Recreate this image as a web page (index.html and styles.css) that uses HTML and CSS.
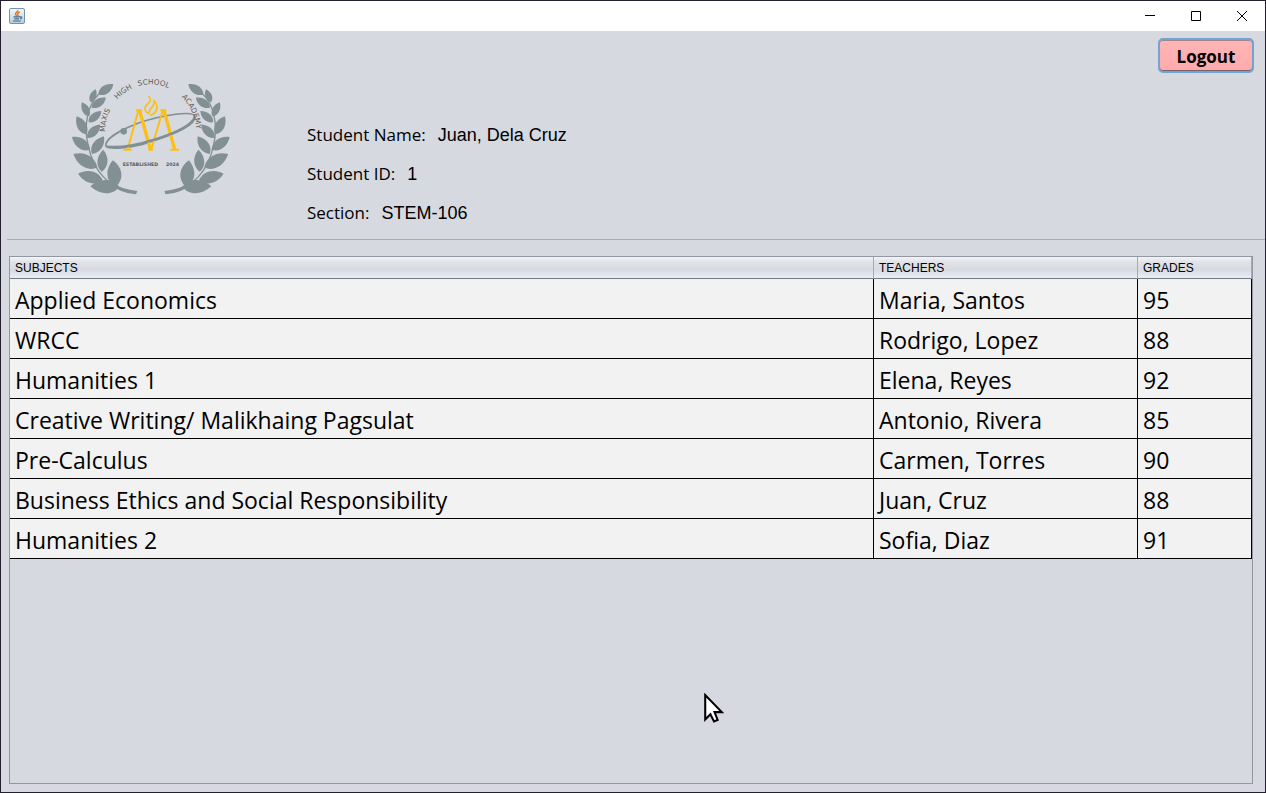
FILE: index.html
```html
<!DOCTYPE html>
<html lang="en">
<head>
<meta charset="utf-8">
<title>Student Grades</title>
<link rel="stylesheet" href="styles.css">
</head>
<body>
<div class="window">
  <header class="titlebar">
    <svg class="app-icon" viewBox="0 0 16 16" aria-hidden="true">
      <defs><linearGradient id="tile" x1="0" y1="0" x2="0" y2="1"><stop offset="0" stop-color="#f4f8fb"/><stop offset="1" stop-color="#b9cbd9"/></linearGradient></defs>
      <rect x=".5" y=".5" width="15" height="15" rx="1.5" fill="url(#tile)" stroke="#7593ab"/>
      <path d="M8.800 2C9.500 3.500 6 4.500 6.500 6.200C6.800 7.200 7.600 7.600 8 8.300M10.800 4C8.500 4.800 8 5.800 9 6.800C9.500 7.500 9 8 8.800 8.400" fill="none" stroke="#e3751f" stroke-width="1.400"/>
      <path d="M4.500 8.900H10.600M10.600 8.900C13.500 8.300 13.300 10.600 10.900 11M5.400 10.900H10M4 13H11.800" fill="none" stroke="#3f6d91" stroke-width="1.200"/>
    </svg>
    <div class="window-buttons">
      <button class="window-button" type="button" aria-label="Minimize"><svg viewBox="0 0 11 11"><path d="M0 4.500H10"/></svg></button>
      <button class="window-button" type="button" aria-label="Maximize"><svg viewBox="0 0 11 11"><path d="M.5 .5H9.500V9.500H.5Z"/></svg></button>
      <button class="window-button" type="button" aria-label="Close"><svg viewBox="0 0 11 11"><path d="M0 0L10 10M10 0L0 10"/></svg></button>
    </div>
  </header>

  <section class="profile">
    <svg class="logo" viewBox="0 0 540 420" role="img" aria-label="Maxis High School Academy">
      <defs>
        <path id="leaf" d="M0 0C.2 -.3 .65 -.32 1 0C.7 .3 .25 .3 0 0Z"/>
        <path id="arc" d="M135 200A137 145 0 0 1 409 200"/>
        <g id="branch">
          <use href="#leaf" transform="translate(115 86) rotate(-35) scale(55)"/>
          <use href="#leaf" transform="translate(92 109) rotate(-69) scale(42)"/>
          <use href="#leaf" transform="translate(95 125) rotate(-35) scale(52)"/>
          <use href="#leaf" transform="translate(88 151) rotate(-118) scale(48)"/>
          <use href="#leaf" transform="translate(86 169) rotate(-42) scale(51)"/>
          <use href="#leaf" transform="translate(80 205) rotate(-119) scale(62)"/>
          <use href="#leaf" transform="translate(82 216) rotate(-46) scale(56)"/>
          <use href="#leaf" transform="translate(90 251) rotate(-145) scale(66)"/>
          <use href="#leaf" transform="translate(96 264) rotate(-56) scale(64)"/>
          <use href="#leaf" transform="translate(112 304) rotate(-151) scale(82)"/>
          <use href="#leaf" transform="translate(126 317) rotate(-87) scale(66)"/>
          <use href="#leaf" transform="translate(128 342) rotate(-166) scale(76)"/>
          <use href="#leaf" transform="translate(168 362) rotate(-97) scale(80 92)"/>
          <use href="#leaf" transform="translate(178 362) rotate(-179) scale(87)"/>
          <path d="M116 85C84 115 70 180 84 235C98 310 145 372 228 381" fill="none" stroke="#829093" stroke-width="4"/>
          <path d="M150 348Q185 370 232 375L228 385Q185 384 145 352Z"/>
        </g>
      </defs>
      <g fill="#829093">
        <use href="#branch"/>
        <use href="#branch" transform="translate(545 0) scale(-1 1)"/>
      </g>
      <path d="M138 241C132 218 187 190 234 172C310 144 402 134 405 151C410 180 314 215 247 235C196 248 145 250 138 241Z" fill="none" stroke="#829093" stroke-width="5"/>
      <g fill="none" stroke="#fcbf12">
        <path d="M235 134L203 250M308 134L274 250" stroke-width="6"/>
        <path d="M239 134L271 250M312 134L344 250" stroke-width="10"/>
        <path d="M228 133H246M301 133H319M190 251H215M331 251H357M265 251H279" stroke-width="6"/>
        <path d="M266 90C283 111 253 111 255 129C256 138 262 141 268 143M280 102C298 119 293 142 270 148M282 103C286 126 266 123 268 140" stroke-width="5"/>
      </g>
      <path d="M141 242C180 246 235 236 285 220C350 201 397 176 405 152" fill="none" stroke="#829093" stroke-width="7"/>
      <circle cx="191" cy="196" r="10" fill="#829093"/>
      <g class="logo-text">
        <text><textPath href="#arc" startOffset="2">MAXIS</textPath></text>
        <text><textPath href="#arc" startOffset="108">HIGH</textPath></text>
        <text><textPath href="#arc" startOffset="184">SCHOOL</textPath></text>
        <text><textPath href="#arc" startOffset="324">ACADEMY</textPath></text>
      </g>
      <g class="logo-date"><text x="188" y="301">ESTABLISHED</text><text x="318" y="301">2024</text></g>
    </svg>
    <dl class="details">
      <div class="detail"><dt>Student Name:</dt><dd>Juan, Dela Cruz</dd></div>
      <div class="detail"><dt>Student ID:</dt><dd>1</dd></div>
      <div class="detail"><dt>Section:</dt><dd>STEM-106</dd></div>
    </dl>
    <button class="logout" type="button">Logout</button>
  </section>

  <main class="grades">
    <table class="grade-table">
      <colgroup><col><col class="col-teacher"><col class="col-grade"></colgroup>
      <thead><tr><th scope="col">SUBJECTS</th><th scope="col">TEACHERS</th><th scope="col">GRADES</th></tr></thead>
      <tbody>
        <tr><td>Applied Economics</td><td>Maria, Santos</td><td>95</td></tr>
        <tr><td>WRCC</td><td>Rodrigo, Lopez</td><td>88</td></tr>
        <tr><td>Humanities 1</td><td>Elena, Reyes</td><td>92</td></tr>
        <tr><td>Creative Writing/ Malikhaing Pagsulat</td><td>Antonio, Rivera</td><td>85</td></tr>
        <tr><td>Pre-Calculus</td><td>Carmen, Torres</td><td>90</td></tr>
        <tr><td>Business Ethics and Social Responsibility</td><td>Juan, Cruz</td><td>88</td></tr>
        <tr><td>Humanities 2</td><td>Sofia, Diaz</td><td>91</td></tr>
      </tbody>
    </table>
  </main>
</div>
<svg class="pointer" viewBox="0 0 20 29" aria-hidden="true"><path d="M2 2V25.500L7 20.500L10.500 27.500L14 26L11 18.500H18Z" fill="#fff" stroke="#000" stroke-width="2"/></svg>
</body>
</html>
```
FILE: styles.css
```css
* { box-sizing: border-box; }

body {
  margin: 0;
  color: #000;
  font-family: "Open Sans", "Noto Sans", sans-serif;
}

.window {
  display: flex;
  flex-direction: column;
  min-height: 100vh;
  border: 1px solid #241f2e;
  background: #d6d9e0;
}

.titlebar {
  display: flex;
  align-items: center;
  justify-content: space-between;
  height: 30px;
  padding-left: 8px;
  background: #fff;
}

.app-icon { width: 16px; height: 16px; }

.window-buttons { display: flex; height: 100%; }

.window-button {
  display: grid;
  place-items: center;
  width: 46px;
  padding: 0;
  border: 0;
  background: none;
}

.window-button svg {
  width: 11px;
  height: 11px;
  fill: none;
  stroke: #000;
}

.profile {
  display: flex;
  align-items: flex-start;
  margin-left: 6px;
  padding: 7px 11px 0 53px;
  min-height: 209px;
  border-bottom: 1px solid #a5a9b2;
}

.logo {
  flex: none;
  width: 180px;
  height: 140px;
  margin-top: 28px;
}

.logo-text, .logo-date {
  fill: #5d5b51;
  font-family: "DejaVu Sans", sans-serif;
  font-size: 22px;
}

.logo-date { font-size: 14px; font-weight: bold; }

.details {
  flex: 1;
  display: grid;
  gap: 15px;
  margin: 85px 0 0 67px;
  line-height: 24px;
}

.detail {
  display: flex;
  align-items: baseline;
  gap: 12px;
}

dt { font-size: 17px; }

dd {
  margin: 0;
  font-family: "Liberation Sans", Arial, sans-serif;
  font-size: 18px;
}

.logout {
  width: 96px;
  height: 35px;
  padding: 1px 0 0;
  border: 2px solid #73a4d1;
  border-radius: 5px;
  background: linear-gradient(#ffb6b6, #ffaaaa);
  box-shadow: inset 0 -1px #75616f, inset 0 1px #a5858c;
  color: #000;
  font: bold 17px "Open Sans", "Noto Sans", sans-serif;
}

.grades {
  flex: 1;
  margin: 16px 12px 8px 8px;
  border: 1px solid #9297a1;
}

.grade-table {
  width: 100%;
  table-layout: fixed;
  border-collapse: separate;
  border-spacing: 0;
}

.col-teacher { width: 264px; }
.col-grade { width: 114px; }

th, td { padding: 0 5px; text-align: left; }

th {
  height: 22px;
  border-right: 1px solid #a5a9b2;
  border-bottom: 1px solid #747b86;
  background: linear-gradient(#f3f4f7 0%, #e0e2e7 25%, #d7dae1 60%, #e9edf6 100%);
  font: 12px "Liberation Sans", Arial, sans-serif;
}

td {
  height: 40px;
  padding-top: 2px;
  border-right: 1px solid #000;
  border-bottom: 1px solid #000;
  background: #f2f2f2;
  font-size: 23px;
  line-height: 32px;
}

.pointer {
  position: absolute;
  left: 703px;
  top: 693px;
  width: 21px;
  height: 30px;
}
```
